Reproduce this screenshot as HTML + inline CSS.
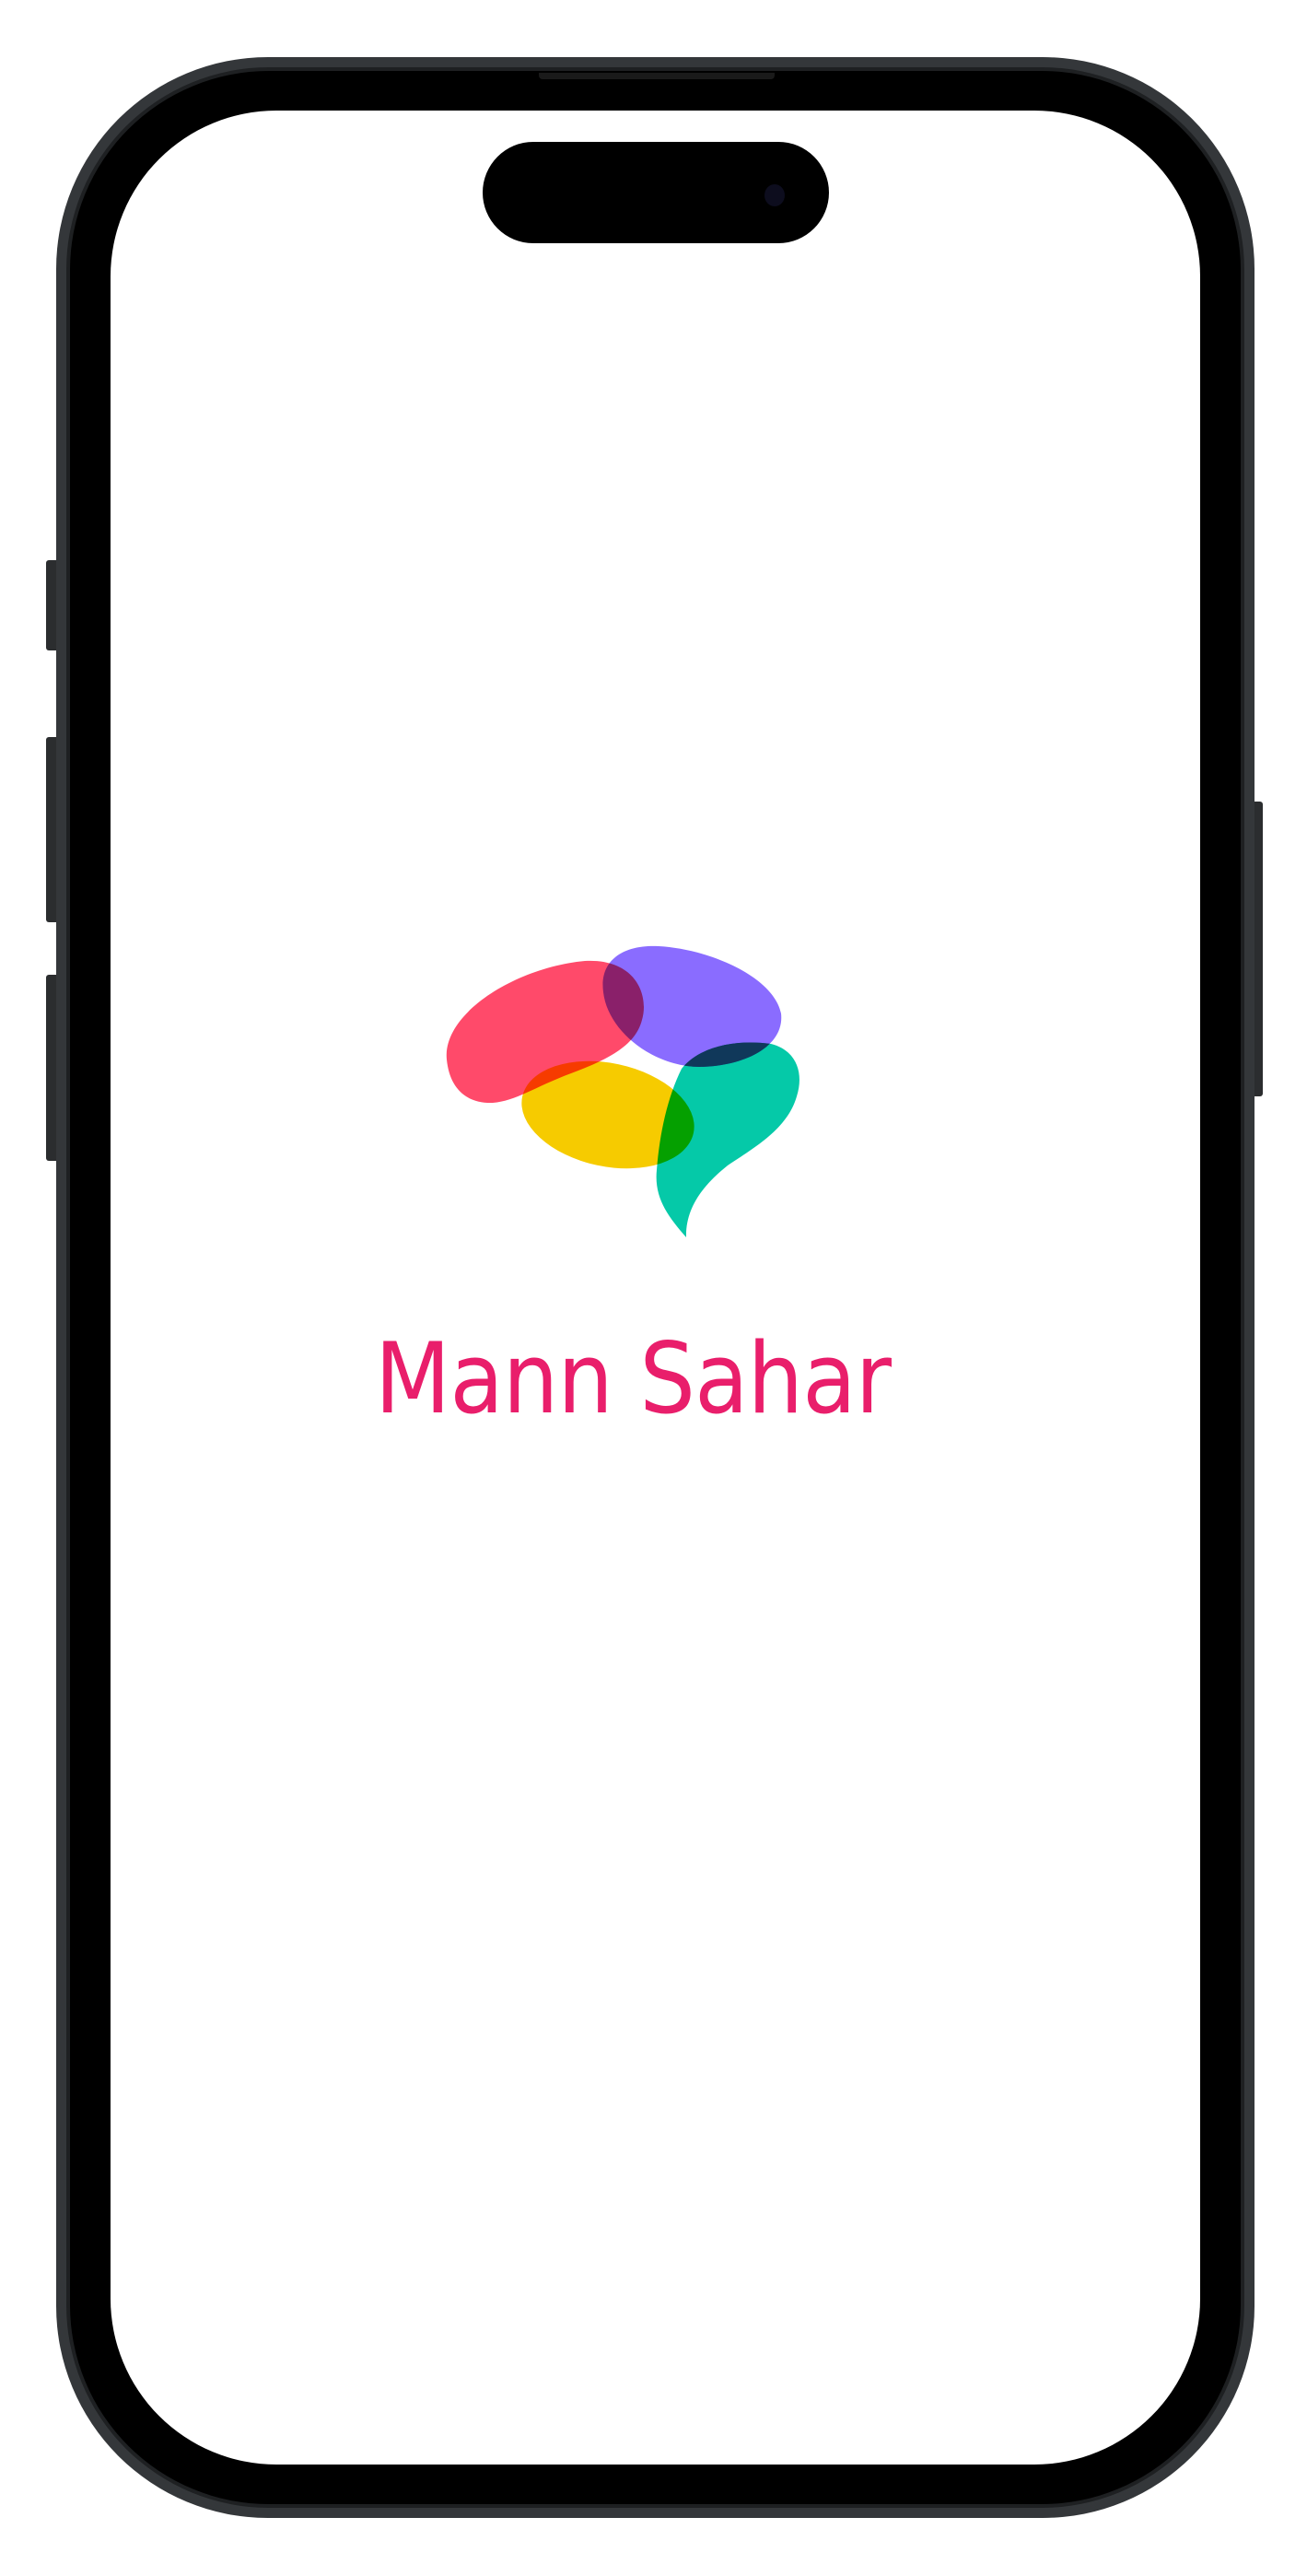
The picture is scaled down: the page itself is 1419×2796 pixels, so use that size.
<!DOCTYPE html>
<html><head><meta charset="utf-8"><style>
html,body{margin:0;padding:0;background:#fff;}
body{width:1419px;height:2796px;position:relative;overflow:hidden;}
.abs{position:absolute;}
.outer{left:61px;top:62px;width:1301px;height:2671px;border-radius:230px;background:#34373a;}
.ring{left:72px;top:73px;width:1279px;height:2649px;border-radius:220px;background:#1e2022;}
.bez{left:76px;top:77px;width:1271px;height:2641px;border-radius:216px;background:#000;}
.screen{left:120px;top:120px;width:1183px;height:2555px;border-radius:180px;background:#fff;}
.island{left:524px;top:154px;width:376px;height:110px;border-radius:55px;background:#000;}
.btn{background:#2b2d2f;border-radius:3px;}
.title{left:287px;width:800px;top:1432px;text-align:center;white-space:nowrap;font-family:"DejaVu Sans","Liberation Sans",sans-serif;font-size:106px;color:#e91e6b;letter-spacing:-1px;line-height:130px;transform:scaleX(0.9);transform-origin:400px 0;}
</style></head><body>
<div class="abs btn" style="left:50px;top:608px;width:14px;height:98px"></div>
<div class="abs btn" style="left:50px;top:800px;width:14px;height:201px"></div>
<div class="abs btn" style="left:50px;top:1058px;width:14px;height:202px"></div>
<div class="abs btn" style="left:1358px;top:870px;width:13px;height:320px"></div>
<div class="abs outer"></div>
<div class="abs ring"></div>
<div class="abs bez"></div>
<div class="abs" style="left:585px;top:79px;width:256px;height:7px;background:#1a1a1a;border-radius:0 0 4px 4px"></div>
<div class="abs screen"></div>
<div class="abs island"></div>
<div class="abs" style="left:830px;top:200px;width:22px;height:24px;border-radius:50%;background:#0d0d1e"></div>
<svg class="abs" style="left:0;top:0" width="1419" height="1400" viewBox="0 0 1419 1400">
<defs><clipPath id="pc"><path d="M655 1077 C650 1040 680 1025 715 1027 C770 1030 840 1060 848 1100 C852 1135 810 1157 760 1158 C710 1158 660 1120 655 1077 Z"/></clipPath></defs>
<g style="isolation:isolate">
<path d="M485 1150 C480 1100 560 1050 635 1043 C690 1040 705 1080 697 1107 C690 1135 660 1150 620 1165 C580 1180 560 1195 535 1197 C505 1198 488 1180 485 1150 Z" fill="#ff4a6a" style="mix-blend-mode:multiply"/>
<path d="M655 1077 C650 1040 680 1025 715 1027 C770 1030 840 1060 848 1100 C852 1135 810 1157 760 1158 C710 1158 660 1120 655 1077 Z" fill="#8a6cff" style="mix-blend-mode:multiply"/>
<ellipse cx="660" cy="1210" rx="95" ry="56" transform="rotate(12 660 1210)" fill="#f6cb00" style="mix-blend-mode:multiply"/>
<path d="M745 1343 C725 1320 710 1300 713 1270 C716 1230 725 1190 740 1160 C760 1135 800 1128 837 1133 C865 1140 873 1165 865 1190 C855 1225 820 1245 790 1265 C765 1285 744 1310 745 1343 Z" fill="#05c9a8" style="mix-blend-mode:multiply"/>
</g>
<path clip-path="url(#pc)" d="M745 1343 C725 1320 710 1300 713 1270 C716 1230 725 1190 740 1160 C760 1135 800 1128 837 1133 C865 1140 873 1165 865 1190 C855 1225 820 1245 790 1265 C765 1285 744 1310 745 1343 Z" fill="#10385a"/>
</svg>
<div class="abs title">Mann Sahar</div>
</body></html>
